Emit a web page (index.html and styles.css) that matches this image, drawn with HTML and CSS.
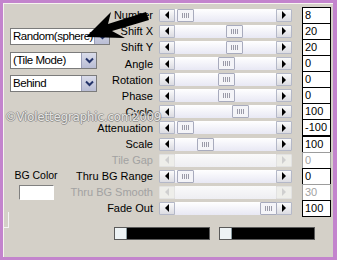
FILE: index.html
```html
<!DOCTYPE html>
<html lang="en">
<head>
  <meta charset="UTF-8" />
  <title>Tile Settings</title>
  <link rel="stylesheet" href="styles.css">
</head>
<body>
  <div class="frame">
    <div class="panel">

      <div class="side">
        <div class="combo wide">
          <span class="combo-text">Random(sphere)</span>
          <span class="combo-btn"><svg width="9" height="7" viewBox="0 0 9 7"><path d="M1 1.5l3.5 3.5 3.5-3.5" fill="none" stroke="#24346a" stroke-width="2"/></svg></span>
        </div>
        <div class="combo">
          <span class="combo-text">(Tile Mode)</span>
          <span class="combo-btn"><svg width="9" height="7" viewBox="0 0 9 7"><path d="M1 1.5l3.5 3.5 3.5-3.5" fill="none" stroke="#24346a" stroke-width="2"/></svg></span>
        </div>
        <div class="combo">
          <span class="combo-text">Behind</span>
          <span class="combo-btn"><svg width="9" height="7" viewBox="0 0 9 7"><path d="M1 1.5l3.5 3.5 3.5-3.5" fill="none" stroke="#24346a" stroke-width="2"/></svg></span>
        </div>

        <div class="bg-color">
          <div class="bg-label">BG Color</div>
          <div class="color-box"></div>
        </div>
        <div class="corner"></div>
      </div>

      <div class="params">
        <div class="row">
          <span class="label">Number</span>
          <div class="slider"><span class="btn left"></span><span class="track"><span class="thumb" style="left:2px"></span></span><span class="btn right"></span></div>
          <span class="value">8</span>
        </div>
        <div class="row">
          <span class="label">Shift X</span>
          <div class="slider"><span class="btn left"></span><span class="track"><span class="thumb" style="left:51px"></span></span><span class="btn right"></span></div>
          <span class="value">20</span>
        </div>
        <div class="row">
          <span class="label">Shift Y</span>
          <div class="slider"><span class="btn left"></span><span class="track"><span class="thumb" style="left:51px"></span></span><span class="btn right"></span></div>
          <span class="value">20</span>
        </div>
        <div class="row">
          <span class="label">Angle</span>
          <div class="slider"><span class="btn left"></span><span class="track"><span class="thumb" style="left:43px"></span></span><span class="btn right"></span></div>
          <span class="value">0</span>
        </div>
        <div class="row">
          <span class="label">Rotation</span>
          <div class="slider"><span class="btn left"></span><span class="track"><span class="thumb" style="left:43px"></span></span><span class="btn right"></span></div>
          <span class="value">0</span>
        </div>
        <div class="row">
          <span class="label">Phase</span>
          <div class="slider"><span class="btn left"></span><span class="track"><span class="thumb" style="left:43px"></span></span><span class="btn right"></span></div>
          <span class="value">0</span>
        </div>
        <div class="row">
          <span class="label">Cycle</span>
          <div class="slider"><span class="btn left"></span><span class="track"><span class="thumb" style="left:57px"></span></span><span class="btn right"></span></div>
          <span class="value">100</span>
        </div>
        <div class="row">
          <span class="label">Attenuation</span>
          <div class="slider"><span class="btn left"></span><span class="track"><span class="thumb" style="left:2px"></span></span><span class="btn right"></span></div>
          <span class="value">-100</span>
        </div>
        <div class="row">
          <span class="label">Scale</span>
          <div class="slider"><span class="btn left"></span><span class="track"><span class="thumb" style="left:22px"></span></span><span class="btn right"></span></div>
          <span class="value">100</span>
        </div>
        <div class="row off">
          <span class="label">Tile Gap</span>
          <div class="slider"><span class="btn left"></span><span class="track"></span><span class="btn right"></span></div>
          <span class="value">0</span>
        </div>
        <div class="row">
          <span class="label">Thru BG Range</span>
          <div class="slider"><span class="btn left"></span><span class="track"><span class="thumb" style="left:2px"></span></span><span class="btn right"></span></div>
          <span class="value">0</span>
        </div>
        <div class="row off">
          <span class="label">Thru BG Smooth</span>
          <div class="slider"><span class="btn left"></span><span class="track"></span><span class="btn right"></span></div>
          <span class="value">30</span>
        </div>
        <div class="row">
          <span class="label">Fade Out</span>
          <div class="slider"><span class="btn left"></span><span class="track"><span class="thumb" style="left:85px"></span></span><span class="btn right"></span></div>
          <span class="value">100</span>
        </div>

        <div class="ramps">
          <div class="ramp"><span class="knob"></span></div>
          <div class="ramp"><span class="knob"></span></div>
        </div>
      </div>

      <!-- watermark and pointer lie over the controls -->
      <div class="watermark">©Violettegraphic.com2009</div>
      <svg class="pointer" width="75" height="40" viewBox="80 5 75 40">
        <polygon points="86,37 111,12 108,24 146,12 149,20 112,31 125,38" fill="#000"/>
      </svg>
    </div>
  </div>
</body>
</html>
```

FILE: styles.css
```css
html, body {
  margin: 0;
  padding: 0;
}

body {
  font-family: "Liberation Sans", Arial, sans-serif;
  font-size: 11px;
  color: #000;
}

.frame {
  width: 337px;
  height: 260px;
  box-sizing: border-box;
  padding: 3px 4px 3px 3px;
  background: #c384cd;
}

.panel {
  position: relative;
  height: 100%;
  box-sizing: border-box;
  display: flex;
  background: #d4d0c8;
  border-left: 1px solid #f6f4f0;
  border-top: 1px solid #f6f4f0;
}

/* left column: combos + colour */
.side {
  width: 56px;
  flex: none;
  display: flex;
  flex-direction: column;
}

.combo {
  display: flex;
  width: 87px;
  height: 17px;
  margin-left: 6px;
  box-sizing: border-box;
  border: 1px solid #7b7b7b;
  background: #fff;
}

.combo.wide {
  width: 100px;
  margin-top: 24px;
}

.combo + .combo {
  margin-top: 6.5px;
}

.combo-text {
  flex: 1;
  padding-left: 2px;
  font-size: 11.5px;
  letter-spacing: -0.45px;
  line-height: 15px;
  white-space: nowrap;
  overflow: hidden;
}

.combo-btn {
  width: 14px;
  flex: none;
  display: flex;
  align-items: center;
  justify-content: center;
  background: linear-gradient(#dadcea, #b9bdd4);
  border-left: 1px solid #9a9eb8;
}

.bg-color {
  width: 46px;
  margin: 77px 0 0 9px;
  text-align: center;
  font-size: 10.5px;
}

.color-box {
  width: 35px;
  height: 15px;
  margin: 4px auto 0;
  box-sizing: border-box;
  background: #fff;
  border: 1px solid #fff;
  border-top-color: #808080;
  border-left-color: #808080;
}

.corner {
  width: 5px;
  height: 15px;
  margin: 12px 0 0 -1px;
  border-right: 1px solid #f4f4f4;
  border-bottom: 1px solid #f4f4f4;
}

/* parameter rows */
.params {
  flex: none;
  width: 271px;
  padding-top: 3.25px;
}

.row {
  display: flex;
  align-items: center;
  height: 16.1px;
}

.label {
  width: 93px;
  flex: none;
  text-align: right;
  white-space: nowrap;
}

.slider {
  display: flex;
  width: 133px;
  height: 13px;
  margin-left: 6px;
  flex: none;
}

.btn {
  width: 16px;
  flex: none;
  box-sizing: border-box;
  display: flex;
  align-items: center;
  justify-content: center;
  border: 1px solid #b4b8c8;
  border-radius: 1px;
  background: linear-gradient(#fbfbfb, #dcdce2);
}

.btn::before {
  content: "";
  border-top: 4px solid transparent;
  border-bottom: 4px solid transparent;
}

.btn.left::before {
  border-right: 4px solid #000;
}

.btn.right::before {
  border-left: 4px solid #000;
}

.track {
  position: relative;
  flex: 1;
  background: linear-gradient(#ffffff, #e8e8f4);
}

.thumb {
  position: absolute;
  top: 0;
  width: 17px;
  height: 13px;
  box-sizing: border-box;
  border: 1px solid #a8abbd;
  border-radius: 1px;
  background: #f4f4f8 repeating-linear-gradient(90deg, #9a9aa8 0, #9a9aa8 1px, transparent 1px, transparent 2px) no-repeat 4px 3px / 7px 5px;
}

.value {
  width: 29px;
  height: 17px;
  margin-left: 10px;
  flex: none;
  box-sizing: border-box;
  border: 1px solid #000;
  background: #fff;
  padding-left: 2px;
  line-height: 15px;
}

.row.off .label,
.row.off .value {
  color: #a2a2a2;
}

.row.off .value {
  border-color: #9c9c9c;
}

.row.off .btn {
  border-color: #e2e2e2;
  background: #eeeeea;
}

.row.off .btn.left::before {
  border-right-color: #cfcfcf;
}

.row.off .btn.right::before {
  border-left-color: #cfcfcf;
}

.row.off .track {
  background: linear-gradient(#fafafa, #eeeef2);
}

/* gradient ramps */
.ramps {
  display: flex;
  gap: 9px;
  margin-top: 10.5px;
  padding-left: 54px;
}

.ramp {
  width: 96px;
  height: 13px;
  box-sizing: border-box;
  background: #000;
  border: 1px solid #5a5a5a;
}

.knob {
  display: block;
  width: 11px;
  height: 100%;
  background: #eef3f5;
  border-right: 1px solid #8a9aa0;
}

/* overlays */
.watermark {
  position: absolute;
  left: 1px;
  top: 107px;
  font-family: "DejaVu Sans", Verdana, sans-serif;
  font-size: 11.5px;
  line-height: 12px;
  white-space: nowrap;
  color: rgba(255, 255, 255, 0.8);
  text-shadow: 1px 0 0 rgba(110, 110, 110, 0.55), -1px 0 0 rgba(110, 110, 110, 0.55), 0 1px 0 rgba(110, 110, 110, 0.55), 0 -1px 0 rgba(110, 110, 110, 0.4);
}

.pointer {
  position: absolute;
  left: 76px;
  top: 1px;
}
```
